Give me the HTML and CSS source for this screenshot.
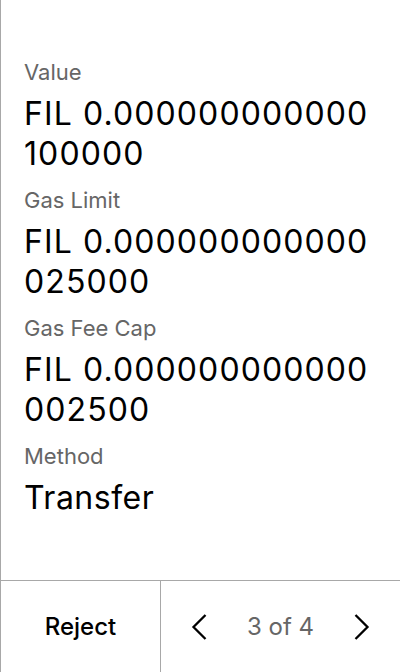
FILE: index.html
```html
<!DOCTYPE html>
<html>
<head>
<meta charset="utf-8">
<link rel="stylesheet" href="styles.css">
</head>
<body>
<div class="screen">
  <div class="content">
    <div class="field">
      <div class="label">Value</div>
      <div class="value num">FIL 0.000000000000 100000</div>
    </div>
    <div class="field">
      <div class="label">Gas Limit</div>
      <div class="value num">FIL 0.000000000000 025000</div>
    </div>
    <div class="field">
      <div class="label">Gas Fee Cap</div>
      <div class="value num">FIL 0.000000000000 002500</div>
    </div>
    <div class="field">
      <div class="label">Method</div>
      <div class="value">Transfer</div>
    </div>
  </div>
  <div class="footer">
    <div class="reject">Reject</div>
    <div class="pager">
      <svg class="chev" width="18" height="28" viewBox="0 0 18 28"><path d="M15.5 2 L3.5 14 L15.5 26" fill="none" stroke="#000" stroke-width="2.3"/></svg>
      <span class="count">3 of 4</span>
      <svg class="chev" width="18" height="28" viewBox="0 0 18 28"><path d="M2.5 2 L14.5 14 L2.5 26" fill="none" stroke="#000" stroke-width="2.3"/></svg>
    </div>
  </div>
</div>
</body>
</html>
```
FILE: styles.css
```css
html, body { margin: 0; padding: 0; background: #fff; }
body { font-family: Inter, "Noto Sans", sans-serif; }
.screen {
  width: 400px; height: 672px; box-sizing: border-box;
  border-left: 1px solid #a8a8a8;
  display: flex; flex-direction: column;
}
.content { flex: 1; padding: 58px 24px 0 23px; display: flex; flex-direction: column; }
.field { display: flex; flex-direction: column; height: 128px; }
.label { font-size: 22px; line-height: 28px; color: #666; }
.value { font-size: 32px; line-height: 40px; color: #000; margin-top: 8px; letter-spacing: 0.5px; }
.value.num { letter-spacing: 1.1px; }
.footer {
  height: 92px; border-top: 1px solid #a8a8a8; box-sizing: border-box;
  display: flex;
}
.reject {
  width: 159px; border-right: 1px solid #a8a8a8;
  display: flex; align-items: center; justify-content: center;
  font-size: 24px; font-weight: 500; color: #000;
}
.pager { flex: 1; display: flex; align-items: center; justify-content: space-between; padding: 0 29px 0 29px; }
.count { font-size: 24px; color: #666; }
```
